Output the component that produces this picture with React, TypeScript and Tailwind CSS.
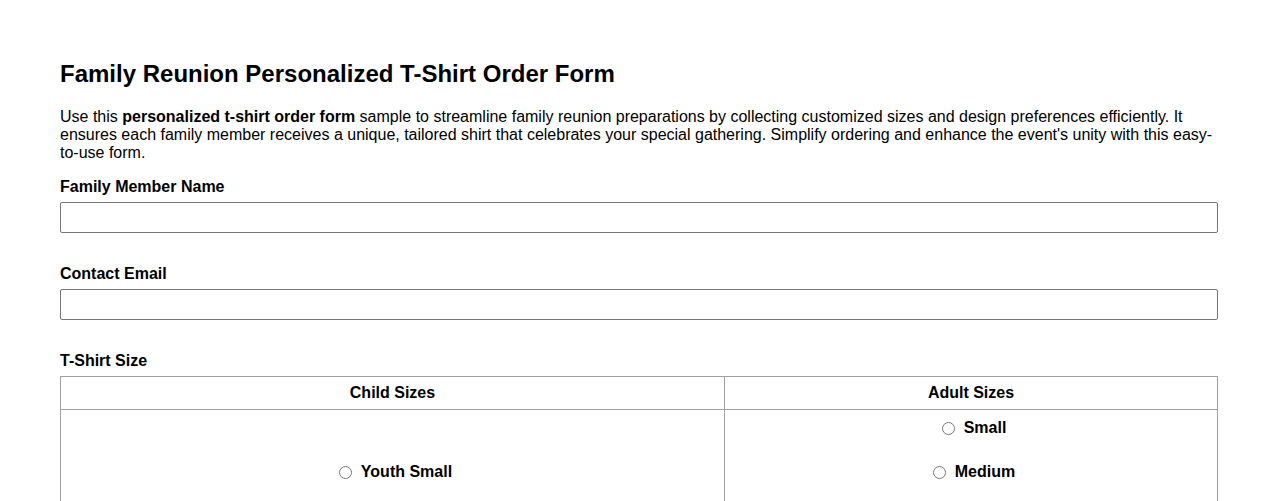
import React from "react";

const Radio = ({ name, label }: { name: string; label: string }) => (
  <label className="flex items-center justify-center h-[18px] font-bold">
    <input type="radio" name={name} className="w-[13px] h-[13px] ml-[6px] mr-[9px] accent-gray-500" />
    {label}
  </label>
);

export default function App() {
  return (
    <div className="bg-white text-black px-[60px] pt-[60px] text-[16px] leading-[18px]" style={{ fontFamily: '"Liberation Sans", Arial, sans-serif' }}>
      <h2 className="text-[24px] leading-[28px] font-bold">Family Reunion Personalized T-Shirt Order Form</h2>
      <p className="mt-[20px]">
        Use this <b>personalized t-shirt order form</b> sample to streamline family reunion preparations by collecting customized sizes and design preferences efficiently. It ensures each family member receives a unique, tailored shirt that celebrates your special gathering. Simplify ordering and enhance the event's unity with this easy-to-use form.
      </p>
      <div className="mt-[16px] font-bold">Family Member Name</div>
      <input type="text" className="block mt-[6px] w-full h-[31px] border border-[#767676] rounded-[2px]" />
      <div className="mt-[32px] font-bold">Contact Email</div>
      <input type="email" className="block mt-[6px] w-full h-[31px] border border-[#767676] rounded-[2px]" />
      <div className="mt-[32px] font-bold">T-Shirt Size</div>
      <div className="mt-[6px] grid grid-cols-[664px_1fr] border border-[#a0a0a0]">
        <div className="text-center font-bold py-[7px] border-r border-b border-[#a0a0a0]">Child Sizes</div>
        <div className="text-center font-bold py-[7px] border-b border-[#a0a0a0]">Adult Sizes</div>
        <div className="flex flex-col justify-center gap-[26px] pt-[9px] pb-[8px] border-r border-[#a0a0a0]">
          <Radio name="child" label="Youth Small" />
          <Radio name="child" label="Youth Medium" />
          <Radio name="child" label="Youth Large" />
        </div>
        <div className="flex flex-col justify-center gap-[26px] pt-[9px] pb-[8px]">
          <Radio name="adult" label="Small" />
          <Radio name="adult" label="Medium" />
          <Radio name="adult" label="Large" />
          <Radio name="adult" label="X-Large" />
          <Radio name="adult" label="XX-Large" />
        </div>
      </div>
    </div>
  );
}
